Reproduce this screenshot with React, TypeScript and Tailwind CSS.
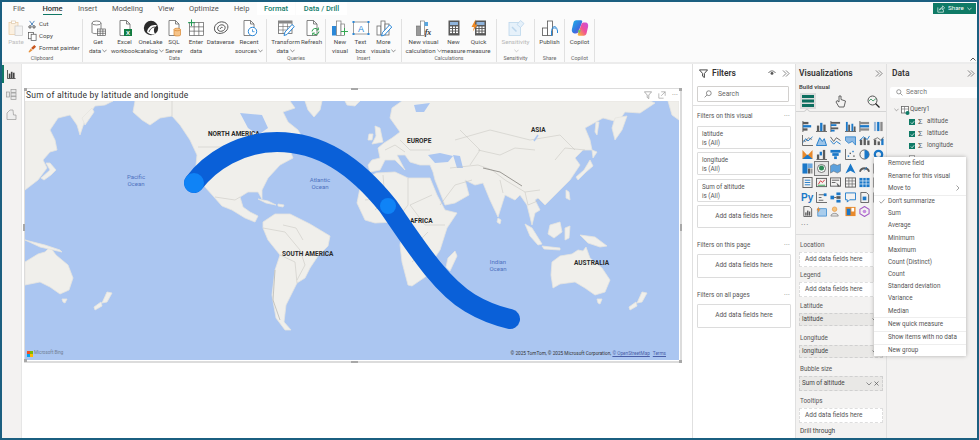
import React from "react";

const F = { fontFamily: 'Roboto,"Open Sans",sans-serif' };

/* ---------- Ribbon icons ---------- */
const Svg = ({ children, s = 18, cls = "" }: { children: React.ReactNode; s?: number; cls?: string }) => (
  <svg width={s} height={s} viewBox="0 0 18 18" fill="none" className={cls}>{children}</svg>
);
const GRID = "#5a5a5a";
const MiniTable = ({ x, y, w, h, c = GRID }: { x: number; y: number; w: number; h: number; c?: string }) => (
  <g stroke={c} strokeWidth="0.7">
    <rect x={x} y={y} width={w} height={h} fill="#fff" />
    <path d={`M${x} ${y + h / 3}H${x + w}M${x} ${y + (2 * h) / 3}H${x + w}M${x + w / 3} ${y}V${y + h}M${x + (2 * w) / 3} ${y}V${y + h}`} />
  </g>
);
const Doc = ({ c = "#666" }: { c?: string }) => (
  <path d="M4 1.5H10.5L14 5V16.5H4Z M10.5 1.5V5H14" stroke={c} strokeWidth="0.8" fill="#fff" />
);
const Bars = ({ c = "#6b6b6b" }: { c?: string }) => (
  <g stroke={c} strokeWidth="0.8" fill="#fff">
    <rect x="2" y="7" width="4" height="9" />
    <rect x="6" y="2" width="4" height="14" />
    <rect x="10" y="5" width="4" height="11" />
  </g>
);
const Calc = () => (
  <g>
    <rect x="3.5" y="1.5" width="11" height="15" fill="#595959" />
    <rect x="5" y="3" width="8" height="3" fill="#8fb4dc" />
    <g fill="#fff">
      {[7.5, 10, 12.5].map((y) => [5, 8, 11].map((x) => <rect key={`${x}-${y}`} x={x} y={y} width="2" height="1.6" />))}
    </g>
  </g>
);
const RIcons: Record<string, React.ReactNode> = {
  paste: (
    <Svg s={18}>
      <rect x="2" y="3.5" width="9" height="12" fill="#fbf0e0" stroke="#e8c9a0" strokeWidth="0.7" />
      <rect x="8" y="7" width="7.5" height="9.5" fill="#f3f3f3" stroke="#c9c9c9" strokeWidth="0.7" />
      <rect x="4.5" y="2" width="4" height="2.5" fill="#fff" stroke="#d8c0a0" strokeWidth="0.6" />
    </Svg>
  ),
  get: (
    <Svg>
      <path d="M3 4V13.5C3 15 12 15 12 13.5V4" stroke="#666" strokeWidth="0.8" fill="#fff" />
      <ellipse cx="7.5" cy="4" rx="4.5" ry="2" stroke="#666" strokeWidth="0.8" fill="#fff" />
      <MiniTable x={8.5} y={10} w={8} h={6.5} />
    </Svg>
  ),
  excel: (
    <Svg>
      <Doc />
      <rect x="8" y="10" width="8" height="7" fill="#107c41" />
      <text x="12" y="15.8" fontSize="6" fontWeight="700" fill="#fff" textAnchor="middle" fontFamily="Liberation Sans">X</text>
    </Svg>
  ),
  onelake: (
    <Svg>
      <circle cx="9" cy="9" r="7.2" fill="#2b2b2b" />
      <path d="M5 13C6 8 10 5 15 6.5C12 8 11 11 13 15C10 16 7 15 5 13Z" fill="#fff" />
      <path d="M7 13C8 10 10 8 13 8" stroke="#2b2b2b" strokeWidth="0.8" />
    </Svg>
  ),
  sql: (
    <Svg>
      <Doc />
      <path d="M9 10.5V16C9 17.3 15.5 17.3 15.5 16V10.5" fill="#f6c48a" stroke="#d9862f" strokeWidth="0.7" />
      <ellipse cx="12.2" cy="10.5" rx="3.2" ry="1.3" fill="#f6c48a" stroke="#d9862f" strokeWidth="0.7" />
    </Svg>
  ),
  enter: (
    <Svg>
      <MiniTable x={2.5} y={3.5} w={14} h={13} />
      <path d="M4.5 0.5V7M1 3.7H8" stroke="#1f9d55" strokeWidth="1" />
    </Svg>
  ),
  dataverse: (
    <Svg>
      <g stroke="#555" strokeWidth="1" fill="none">
        <path d="M3 12C0.5 6 7 2 11 3C16 3.500 17.500 9 14 12C11 15 5 15.500 3 12Z" />
        <path d="M6 11C4.500 8 8 5 11 6C14 7 13.500 10 11.500 11.500C9.500 12.800 7 12.500 6 11Z" />
        <path d="M8.500 10C8 8.800 9.500 8 10.500 8.500" />
      </g>
    </Svg>
  ),
  recent: (
    <Svg>
      <Doc />
      <circle cx="12.500" cy="12.500" r="4.200" fill="#fff" stroke="#2b88d8" strokeWidth="1" />
      <path d="M12.500 10.300V12.700H14.500" stroke="#2b88d8" strokeWidth="0.8" />
    </Svg>
  ),
  transform: (
    <Svg>
      <rect x="1.500" y="2" width="13.500" height="12.500" fill="#fff" stroke="#666" strokeWidth="0.8" />
      <rect x="1.500" y="2" width="13.500" height="2.500" fill="#888" />
      <path d="M1.500 7.500H15M1.500 11H15M6 4.500V14.500M10.500 4.500V14.500" stroke="#666" strokeWidth="0.6" />
      <path d="M7 16.500L8 13L15 5.500L17.300 7.500L10 15.500Z" fill="#fff" stroke="#2b88d8" strokeWidth="1" />
    </Svg>
  ),
  refresh: (
    <Svg>
      <Doc />
      <path d="M9 12.500A3.500 3.500 0 0 1 15 10.500M16 12.500A3.500 3.500 0 0 1 10 14.500" stroke="#2e9e4f" strokeWidth="1" />
      <path d="M15.500 8.500V11H13M9.500 16.500V14H12" stroke="#2e9e4f" strokeWidth="0.8" />
    </Svg>
  ),
  newvisual: (
    <Svg>
      <g>
        <rect x="1" y="7" width="4.500" height="9.500" fill="#2b88d8" />
        <rect x="5.500" y="2" width="4.500" height="14.500" fill="#fff" stroke="#777" strokeWidth="0.7" />
        <rect x="10" y="5" width="3.500" height="11.500" fill="#fff" stroke="#777" strokeWidth="0.7" />
      </g>
      <path d="M13.500 9V16M10 12.500H17" stroke="#36a852" strokeWidth="1" />
    </Svg>
  ),
  textbox: (
    <Svg>
      <rect x="1.500" y="3" width="15" height="12" fill="#fff" stroke="#777" strokeWidth="0.7" />
      <g fill="#2b88d8">
        <rect x="0.500" y="2" width="2" height="2" /><rect x="15.500" y="2" width="2" height="2" />
        <rect x="0.500" y="14" width="2" height="2" /><rect x="15.500" y="14" width="2" height="2" />
      </g>
      <text x="9" y="12.800" fontSize="9" fill="#2b88d8" textAnchor="middle" fontFamily="Liberation Sans">A</text>
    </Svg>
  ),
  more: (
    <Svg>
      <Bars />
      <path d="M6.500 17L7.500 13.500L14.500 6L16.800 8L9.500 16Z" fill="#fff" stroke="#2b88d8" strokeWidth="1" />
    </Svg>
  ),
  calc: (
    <Svg>
      <rect x="1.500" y="7" width="4" height="9.500" fill="#999" stroke="#666" strokeWidth="0.6" />
      <rect x="5.500" y="2" width="4" height="14.500" fill="#fff" stroke="#666" strokeWidth="0.6" />
      <rect x="9.500" y="3" width="3.500" height="4" fill="#5aa7e0" />
      <text x="13" y="16" fontSize="8" fontStyle="italic" fontWeight="700" fill="#333" textAnchor="middle" fontFamily="Liberation Serif">fx</text>
    </Svg>
  ),
  measure: <Svg><Calc /></Svg>,
  quick: (
    <Svg>
      <g transform="translate(1.500 0)"><Calc /></g>
      <path d="M5.500 0.500L1.500 8H4L2.800 12.500L7.500 5.500H5Z" fill="#f08a24" />
    </Svg>
  ),
  sens: (
    <Svg>
      <rect x="2" y="3.500" width="11.500" height="13" fill="#e6f1fa" stroke="#bcd6ec" strokeWidth="0.8" />
      <path d="M10 5.500L13.500 1.500L17 4.500L13.500 8.500Z" fill="#e6f1fa" stroke="#bcd6ec" strokeWidth="0.8" />
      <path d="M5 8L9.500 12.500" stroke="#bcd6ec" strokeWidth="1.500" />
    </Svg>
  ),
  publish: (
    <Svg>
      <g stroke="#555" strokeWidth="0.8" fill="#fff">
        <rect x="1.500" y="9" width="5" height="7.500" />
        <rect x="6.500" y="2" width="5" height="14.500" />
      </g>
      <path d="M10.500 17V11.500C10.500 10 12 9 13.500 9C15 9 16.500 10 16.500 12V14" stroke="#2b88d8" strokeWidth="1" />
      <path d="M11 9.500L13.500 7L16 9.500" stroke="#2b88d8" strokeWidth="1" />
    </Svg>
  ),
  copilot: (
    <svg width="18" height="18" viewBox="0 0 20 20">
      <defs>
        <linearGradient id="cpa" x1="0" y1="0" x2="1" y2="1">
          <stop offset="0" stopColor="#19b5e8" /><stop offset="0.6" stopColor="#3a6fe0" /><stop offset="1" stopColor="#b347d8" />
        </linearGradient>
        <linearGradient id="cpb" x1="0" y1="1" x2="1" y2="0">
          <stop offset="0" stopColor="#f9c32b" /><stop offset="0.5" stopColor="#f0509a" /><stop offset="1" stopColor="#c94fe0" />
        </linearGradient>
      </defs>
      <path d="M6 1.500H11C12.500 1.500 13 2.500 12 4.500L8.500 14C8 15.500 7 16 5.500 16H4C1.500 16 0.500 14 1 11.500L2.500 5C3 2.500 4 1.500 6 1.500Z" fill="url(#cpa)" />
      <path d="M14 18.500H9C7.500 18.500 7 17.500 8 15.500L11.500 6C12 4.500 13 4 14.500 4H16C18.500 4 19.500 6 19 8.500L17.500 15C17 17.500 16 18.500 14 18.500Z" fill="url(#cpb)" />
      <path d="M9 16.500L7.500 12.500H11Z" fill="#62c85c" />
    </svg>
  ),
};

const RBtn = ({ w, icon, l1, l2, caret, dim }: { w: number; icon: string; l1: string; l2?: string; caret?: boolean; dim?: boolean }) => (
  <div className="flex shrink-0 flex-col items-center" style={{ width: w }}>
    <div className="flex h-[19px] items-start justify-center">{RIcons[icon]}</div>
    <div className={`whitespace-nowrap text-center text-[6.2px] leading-[8.5px] ${dim ? "text-[#b5b5b5]" : "text-[#4a4a4a]"}`}>{l1}</div>
    <div className={`flex h-[8.5px] items-center whitespace-nowrap text-[6.2px] leading-[8.5px] ${dim ? "text-[#b5b5b5]" : "text-[#4a4a4a]"}`}>
      {l2}
      {caret && (
        <svg width="5" height="4" viewBox="0 0 6 4" className="ml-[1px]"><path d="M0.500 0.500L3 3L5.500 0.500" stroke={dim ? "#b5b5b5" : "#555"} strokeWidth="0.8" fill="none" /></svg>
      )}
    </div>
  </div>
);

const RGroup = ({ w, label, children }: { w: number; label: string; children: React.ReactNode }) => (
  <div className="flex shrink-0 flex-col border-r border-[#e1e1e1]" style={{ width: w }}>
    <div className="flex h-[38px] items-start">{children}</div>
    <div className="text-center text-[5.3px] leading-[7px] text-[#666]">{label}</div>
  </div>
);

const Ribbon = () => (
  <div className="relative h-[62px] shrink-0 border-b-2 border-[#ececec] bg-[#fbfbfb]">
    <div className="flex h-[13px] items-center pl-[11px] text-[7.5px] text-[#555]">
      <span className="w-[10px] whitespace-nowrap">File</span>
      <span className="relative ml-[20px] flex h-[13px] w-[19px] items-center justify-center whitespace-nowrap font-medium text-[#333]">
        Home
        <span className="absolute bottom-[0px] left-0 right-0 h-[1.500px] bg-[#117865]" />
      </span>
      <span className="ml-[16px] w-[18px] whitespace-nowrap">Insert</span>
      <span className="ml-[16px] w-[30px] whitespace-nowrap">Modeling</span>
      <span className="ml-[16px] w-[15px] whitespace-nowrap">View</span>
      <span className="ml-[16px] w-[29px] whitespace-nowrap">Optimize</span>
      <span className="ml-[16px] w-[14px] whitespace-nowrap">Help</span>
      <span className="ml-[9px] flex h-[13px] w-[38px] items-center justify-center whitespace-nowrap bg-white font-medium text-[#127d6b]">Format</span>
      <span className="ml-[1px] flex h-[13px] w-[51px] items-center justify-center whitespace-nowrap bg-white font-medium text-[#127d6b]">Data / Drill</span>
    </div>
    <div className="flex h-[47px] pt-[4px]">
      <div className="flex w-[81px] shrink-0 flex-col border-r border-[#e1e1e1]">
        <div className="flex h-[38px]">
          <div className="ml-[5px] flex w-[18px] flex-col items-center">
            <div className="h-[19px]">{RIcons.paste}</div>
            <span className="text-[6.2px] leading-[8.5px] text-[#bdbdbd]">Paste</span>
          </div>
          <div className="ml-[3px] flex flex-col gap-[1px] text-[6.2px] leading-[11px] text-[#4a4a4a]">
            <div className="flex h-[11px] items-center gap-[2px]">
              <svg width="8" height="9" viewBox="0 0 10 10"><path d="M2 0.500L6.500 6.500M8 0.500L3.500 6.500" stroke="#2b6cb0" strokeWidth="1" /><circle cx="2.500" cy="8" r="1.500" stroke="#333" fill="none" /><circle cx="7.500" cy="8" r="1.500" stroke="#333" fill="none" /></svg>
              <span className="ml-[1px]">Cut</span>
            </div>
            <div className="flex h-[11px] items-center gap-[2px]">
              <svg width="9" height="9" viewBox="0 0 10 10"><rect x="0.500" y="0.500" width="5.500" height="7" fill="#fff" stroke="#555" strokeWidth="0.8" /><rect x="3.500" y="2.500" width="5.500" height="7" fill="#fff" stroke="#555" strokeWidth="0.8" /></svg>
              Copy
            </div>
            <div className="flex h-[11px] items-center gap-[2px] whitespace-nowrap">
              <svg width="9" height="9" viewBox="0 0 10 10"><path d="M0.500 9L3 5L5 7L1.500 9.500Z" fill="#e8913a" /><path d="M3.500 4.500L7 1L9 3L5.500 6.500Z" fill="#c9561c" /></svg>
              Format painter
            </div>
          </div>
        </div>
        <div className="text-center text-[5.3px] leading-[7px] text-[#666]">Clipboard</div>
      </div>
      <RGroup w={184} label="Data">
        <div className="ml-[2px]" />
        <RBtn w={26} icon="get" l1="Get" l2="data" caret />
        <RBtn w={27} icon="excel" l1="Excel" l2="workbook" />
        <RBtn w={25} icon="onelake" l1="OneLake" l2="catalog" caret />
        <RBtn w={22} icon="sql" l1="SQL" l2="Server" />
        <RBtn w={22} icon="enter" l1="Enter" l2="data" />
        <RBtn w={27} icon="dataverse" l1="Dataverse" />
        <RBtn w={30} icon="recent" l1="Recent" l2="sources" caret />
      </RGroup>
      <RGroup w={59} label="Queries">
        <div className="ml-[3px]" />
        <RBtn w={31} icon="transform" l1="Transform" l2="data" caret />
        <RBtn w={21} icon="refresh" l1="Refresh" />
      </RGroup>
      <RGroup w={76} label="Insert">
        <div className="ml-[4px]" />
        <RBtn w={20} icon="newvisual" l1="New" l2="visual" />
        <RBtn w={21} icon="textbox" l1="Text" l2="box" />
        <RBtn w={25} icon="more" l1="More" l2="visuals" caret />
      </RGroup>
      <RGroup w={95} label="Calculations">
        <div className="ml-[4px]" />
        <RBtn w={35} icon="calc" l1="New visual" l2="calculation" caret />
        <RBtn w={25} icon="measure" l1="New" l2="measure" />
        <RBtn w={25} icon="quick" l1="Quick" l2="measure" />
      </RGroup>
      <RGroup w={38} label="Sensitivity">
        <RBtn w={37} icon="sens" l1="Sensitivity" l2=" " caret dim />
      </RGroup>
      <RGroup w={30} label="Share">
        <RBtn w={29} icon="publish" l1="Publish" />
      </RGroup>
      <RGroup w={30} label="Copilot">
        <RBtn w={29} icon="copilot" l1="Copilot" />
      </RGroup>
    </div>
    <div className="absolute right-[1px] top-[1px] flex h-[11px] w-[43px] items-center justify-center gap-[3px] bg-[#0f7a66] text-[6.2px] text-white">
      <svg width="8" height="8" viewBox="0 0 10 10" fill="none" stroke="#fff" strokeWidth="0.8"><path d="M1 3V9H8V6" /><path d="M3 6.500C3.500 4 5.500 3 7 3V1L9.500 3.500L7 6V4.500C5.500 4.500 4 5 3 6.500Z" /></svg>
      Share
      <svg width="5" height="4" viewBox="0 0 6 4"><path d="M0.500 0.500L3 3L5.500 0.500" stroke="#fff" strokeWidth="0.8" fill="none" /></svg>
    </div>
    <svg width="6" height="4" viewBox="0 0 6 4" className="absolute bottom-[1px] right-[1px]"><path d="M0.500 3.500L3 1L5.500 3.500" stroke="#444" strokeWidth="0.9" fill="none" /></svg>
  </div>
);

/* ---------- Left navigation ---------- */
const LeftNav = () => (
  <div className="flex w-[20px] shrink-0 flex-col items-center border-r border-[#e6e6e6] bg-[#f3f2f1]">
    <div className="relative flex h-[20px] w-full items-center justify-center">
      <span className="absolute left-0 top-[1px] h-[18px] w-[1.500px] bg-[#117865]" />
      <svg width="9" height="9" viewBox="0 0 10 10"><path d="M0.500 0V9.500H9.500" stroke="#444" fill="none" /><rect x="2" y="4" width="1.800" height="5" fill="#444" /><rect x="4.300" y="2" width="1.800" height="7" fill="#444" /><rect x="6.600" y="3" width="1.800" height="6" fill="#444" /></svg>
    </div>
    <div className="flex h-[20px] items-center justify-center">
      <svg width="11" height="11" viewBox="0 0 11 11" fill="#e8e8e8" stroke="#999" strokeWidth="0.7"><rect x="5" y="0.500" width="5" height="3" /><rect x="5" y="4" width="5" height="3" /><rect x="5" y="7.500" width="5" height="3" /><rect x="0.500" y="3" width="3" height="5" /></svg>
    </div>
    <div className="flex h-[21px] items-center justify-center">
      <svg width="11" height="11" viewBox="0 0 11 11" fill="#eee" stroke="#999" strokeWidth="0.7"><path d="M1 10.500V4L4 1H7L7.500 6H10V10.500Z" /></svg>
    </div>
  </div>
);

/* ---------- Map ---------- */
const LAND = "#f0efeb";
const land: string[] = [
  "135,101 133,112 142,120 150,125 160,118 172,116 180,125 190,140 197,155 196,165 199,175 205,187 214,197 222,206 232,210 245,218 255,222 258,216 250,212 243,207 240,197 248,192 258,192 262,199 262,190 268,178 280,165 293,158 289,148 298,150 305,142 298,130 288,122 283,112 295,108 290,101",
  "305,101 322,101 320,110 314,117 308,110",
  "258,199 268,201 276,205 266,203",
  "278,204 284,205 283,207 278,206",
  "263,222 275,214 290,214 310,224 330,236 328,246 318,256 310,268 305,278 297,283 291,295 286,305 284,322 291,330 285,330 276,318 272,295 275,270 280,255 268,240 263,228",
  "368,165 372,160 380,158 378,148 384,143 392,138 400,132 395,125 390,118 392,108 402,101 650,101 655,103 640,113 625,112 618,122 603,118 585,128 590,140 592,150 583,150 575,158 580,165 570,180 555,195 545,205 538,198 535,200 540,210 535,213 532,225 527,205 520,195 515,200 505,195 498,217 490,200 483,183 475,185 465,180 469,195 455,203 445,205 435,180 433,172 430,165 420,165 410,162 405,155 397,155 405,170 395,160 385,160 380,170 370,172",
  "357,203 360,188 368,178 376,173 395,172 408,178 430,178 437,195 445,210 457,213 447,228 440,250 430,265 428,275 412,286 408,285 402,262 400,245 403,228 395,222 375,223 365,220",
  "375,126 380,128 383,142 372,144 376,136",
  "369,134 373,134 372,140 368,140",
  "345,101 360,101 355,106 347,105",
  "455,251 457,256 450,271 446,267 448,258",
  "498,218 501,220 500,224 497,222",
  "615,118 627,116 622,130 615,140 612,128",
  "596,122 599,122 597,135 595,132",
  "592,150 597,152 593,158",
  "590,160 593,166 586,172 578,180 576,177 584,170",
  "566,190 569,192 570,200 566,198",
  "525,224 532,228 542,244 538,245 530,236",
  "542,246 560,248 560,250 544,249",
  "550,225 560,222 562,232 554,238 548,234",
  "565,228 570,226 569,238 565,240",
  "580,235 595,237 607,246 600,247 588,243",
  "552,262 560,256 572,254 578,250 583,251 586,247 590,258 602,268 610,280 605,292 595,295 585,288 575,282 560,284 553,288 551,275",
  "597,299 602,299 600,304 598,303",
  "642,292 647,293 642,302 637,303",
  "636,302 637,306 630,310 629,307",
  "668,101 679,101 679,120 672,115",
  "25,101 113,101 105,105 95,106 85,120 80,135 77,125 70,115 58,118 50,130 55,140 57,150 50,152 43,160 47,168 38,180 25,190",
  "82,118 92,108 94,112 85,125",
  "46,163 50,163 56,170 51,175 44,180 41,178 50,170",
  "25,262 38,254 45,252 50,247 56,255 68,265 73,278 69,290 60,294 50,287 40,282 25,285",
  "62,299 67,299 65,303 63,302",
  "107,292 112,293 107,302 102,303",
  "101,302 102,306 95,310 94,307",
  "25,240 45,245 60,250 62,252 40,247",
];
const water: string[] = [
  "240,113 262,115 268,128 258,135 248,128",
  "428,155 440,153 453,156 448,162 435,163",
  "453,155 460,156 463,168 457,168",
  "414,105 430,103 424,112 416,112",
];
const borders = [
  "198,147 257,147 262,150 272,152",
  "172,101 172,116",
  "215,197 235,200 240,197",
  "263,228 285,232 300,250 305,265 297,280",
  "280,255 295,262 297,283",
  "283,225 296,228 303,240",
  "383,175 385,200 375,210",
  "408,178 408,205 395,222",
  "432,195 410,205 425,225 445,225",
  "415,230 425,250 412,262",
  "405,240 420,240 428,232",
  "365,200 385,198 400,205",
  "440,205 455,185 472,180",
  "450,168 478,165 492,170 505,180 525,192 540,190",
  "455,140 490,130 530,140 560,135 575,150",
  "400,140 410,150 430,150",
  "385,150 395,145 405,152",
  "460,130 480,150 470,165",
  "478,150 500,155 515,148 535,150",
  "525,192 528,205 540,200",
  "500,180 503,193",
  "555,160 565,148 585,150",
];

const Legend = () => (
  <div className="relative h-[259px] w-[654px] overflow-hidden bg-[#abc6f1]">
    <svg width="654" height="259" viewBox="25 101 654 259" className="block">
      {land.map((p, i) => <polygon key={i} points={p} fill={LAND} stroke="#e6e4df" strokeWidth="0.8" strokeLinejoin="round" />)}
      {water.map((p, i) => <polygon key={i} points={p} fill="#abc6f1" />)}
      {borders.map((p, i) => <polyline key={i} points={p} fill="none" stroke="#c4c2bc" strokeWidth="0.5" />)}
      <path d="M483 168L500 172L522 186" stroke="#9a9893" strokeWidth="1" fill="none" />
      <path d="M275 270L273 300L280 320" stroke="#b5b3ae" strokeWidth="0.7" fill="none" />
      <path d="M538 135L534 141" stroke="#abc6f1" strokeWidth="1.500" />
    </svg>
    <Lbl x={183} y={29} t="NORTH AMERICA" />
    <Lbl x={382} y={36} t="EUROPE" />
    <Lbl x={506} y={25} t="ASIA" />
    <Lbl x={385} y={116} t="AFRICA" />
    <Lbl x={257} y={149} t="SOUTH AMERICA" />
    <Lbl x={549} y={158} t="AUSTRALIA" />
    <Ocean x={100} y={72} a="Pacific" b="Ocean" />
    <Ocean x={284} y={75} a="Atlantic" b="Ocean" />
    <Ocean x={462} y={157} a="Indian" b="Ocean" />
    <svg width="654" height="259" viewBox="25 101 654 259" className="absolute left-0 top-0">
      <path d="M194 183C210 162 240 142 277 142C320 142 355 165 388 206C415 245 440 285 470 303C485 312 497 316 510 319" stroke="#0a60d8" strokeWidth="20" strokeLinecap="round" fill="none" />
      <circle cx="194" cy="183" r="10" fill="#0f83f6" />
      <circle cx="388" cy="206" r="8" fill="#0f83f6" />
    </svg>
    <div className="absolute bottom-[3px] left-[2px] flex items-center gap-[1px] text-[4.500px] text-[#6f7d92]">
      <span className="grid h-[6px] w-[6px] grid-cols-2">
        <i className="bg-[#f25022]" /><i className="bg-[#7fba00]" /><i className="bg-[#00a4ef]" /><i className="bg-[#ffb900]" />
      </span>
      Microsoft Bing
    </div>
    <div className="absolute bottom-[3px] right-[13px] flex gap-[3px] whitespace-nowrap text-[4.700px] text-[#333]">
      <span>© 2025 TomTom, © 2025 Microsoft Corporation, <span className="text-[#4a5fa8] underline">© OpenStreetMap</span></span>
      <span className="text-[#4a5fa8] underline">Terms</span>
    </div>
  </div>
);
const Lbl = ({ x, y, t }: { x: number; y: number; t: string }) => (
  <span className="absolute whitespace-nowrap text-[6.500px] font-bold leading-[8px] text-[#2a2a2a]" style={{ left: x, top: y }}>{t}</span>
);
const Ocean = ({ x, y, a, b }: { x: number; y: number; a: string; b: string }) => (
  <span className="absolute text-center text-[6px] leading-[7px] text-[#4f72c0]" style={{ left: x, top: y, width: 22 }}>{a}<br />{b}</span>
);

const Handle = ({ cls }: { cls: string }) => <span className={`absolute bg-[#a8a8a8] ${cls}`} />;

const Canvas = () => (
  <div className="w-[670px] shrink-0 bg-white pl-[2px] pt-[24px]">
    <div className="relative h-[275px] w-[658px] border border-b-2 border-r-2 border-[#dcdcdc]">
      <div className="flex h-[12px] items-center justify-between">
        <span className="ml-[1px] whitespace-nowrap text-[8.500px] font-normal tracking-[0.25px] text-[#333]">Sum of altitude by latitude and longitude</span>
        <div className="mr-[2px] flex items-center gap-[6px]">
          <svg width="8" height="8" viewBox="0 0 10 10" fill="none" stroke="#777" strokeWidth="0.7"><path d="M0.500 1H9.500L6 5V9.500L4 8V5Z" /></svg>
          <svg width="8" height="8" viewBox="0 0 10 10" fill="none" stroke="#888" strokeWidth="0.7"><path d="M1 3V9H7M4 1H9V6M4 6L9 1" /></svg>
          <span className="text-[7px] leading-[6px] tracking-[0.2px] text-[#777]">···</span>
        </div>
      </div>
      <Legend />
      <Handle cls="left-[-1px] top-[-1px] h-[3px] w-[3px]" />
      <Handle cls="bottom-[-1px] left-[-1px] h-[3px] w-[3px]" />
      <Handle cls="right-[-2px] top-[-1px] h-[3px] w-[3px]" />
      <Handle cls="bottom-[-2px] right-[-2px] h-[3px] w-[3px]" />
      <Handle cls="left-[326px] top-[-1px] h-[2px] w-[7px]" />
      <Handle cls="bottom-[-2px] left-[326px] h-[2px] w-[7px]" />
      <Handle cls="left-[-2px] top-[135px] h-[7px] w-[2px]" />
      <Handle cls="right-[-2px] top-[135px] h-[7px] w-[2px]" />
    </div>
  </div>
);

/* ---------- Filters ---------- */
const Search = ({ cls }: { cls: string }) => (
  <div className={`flex items-center rounded-[1px] border border-[#d2d0ce] bg-white text-[6.800px] text-[#666] ${cls}`}>
    <svg width="8" height="8" viewBox="0 0 10 10" fill="none" stroke="#555" strokeWidth="0.8"><circle cx="6" cy="4" r="3" /><path d="M3.800 6.200L0.800 9.200" /></svg>
    <span className="ml-[6px]">Search</span>
  </div>
);
const FilterCard = ({ a, b, mt }: { a: string; b: string; mt: string }) => (
  <div className={`h-[23px] rounded-[1px] border border-[#dcdcdc] pl-[4px] pt-[3px] text-[6.300px] leading-[9px] text-[#555] ${mt}`}>
    <div>{a}</div><div>{b}</div>
  </div>
);
const AddCard = ({ mt, h }: { mt: string; h: string }) => (
  <div className={`flex items-center justify-center rounded-[1px] border border-[#dcdcdc] text-[6.500px] text-[#555] ${mt} ${h}`}>Add data fields here</div>
);
const FLabel = ({ t, mt }: { t: string; mt: string }) => (
  <div className={`flex h-[14px] items-center justify-between pr-[1px] text-[6.300px] text-[#555] ${mt}`}>
    <span>{t}</span><span className="text-[6.500px] tracking-[0.3px] text-[#777]">···</span>
  </div>
);
const Chevrons = ({ c = "#555" }: { c?: string }) => (
  <svg width="8" height="7" viewBox="0 0 9 8" fill="none" stroke={c} strokeWidth="0.8"><path d="M1 0.500L4.500 4L1 7.500M4.500 0.500L8 4L4.500 7.500" /></svg>
);
const Filters = () => (
  <div className="w-[103px] shrink-0 border-l border-[#e0e0e0] bg-white">
    <div className="mt-[2px] flex h-[14px] items-center pl-[6px] pr-[5px]">
      <svg width="9" height="9" viewBox="0 0 10 10" fill="none" stroke="#333" strokeWidth="1"><path d="M0.500 1H9.500L6 5V9.500L4 8V5Z" /></svg>
      <span className="ml-[4px] text-[8.500px] font-semibold text-[#333]">Filters</span>
      <svg width="8" height="6" viewBox="0 0 10 7" className="ml-auto mr-[6px]"><path d="M0.500 3.500C3 0 7 0 9.500 3.500" stroke="#555" fill="none" /><circle cx="5" cy="4" r="1.800" fill="#555" /></svg>
      <Chevrons />
    </div>
    <Search cls="ml-[4px] mt-[6px] h-[16px] w-[92px] pl-[6px]" />
    <div className="mt-[3px] border-b border-[#e0e0e0]" />
    <div className="pl-[4px] pr-[4px]">
      <FLabel t="Filters on this visual" mt="mt-[4px]" />
      <FilterCard a="latitude" b="is (All)" mt="mt-[2px]" />
      <FilterCard a="longitude" b="is (All)" mt="mt-[3px]" />
      <FilterCard a="Sum of altitude" b="is (All)" mt="mt-[4px]" />
      <AddCard mt="mt-[3px]" h="h-[23px]" />
      <FLabel t="Filters on this page" mt="mt-[11px]" />
      <AddCard mt="mt-[1px]" h="h-[24px]" />
      <FLabel t="Filters on all pages" mt="mt-[11px]" />
      <AddCard mt="mt-[1px]" h="h-[24px]" />
    </div>
  </div>
);

/* ---------- Visualization gallery icons ---------- */
const B = "#1b78c8";
const D = "#5c5c5c";
const O = "#e8892b";
const V = ({ children }: { children: React.ReactNode }) => (
  <svg width="11" height="11" viewBox="0 0 12 12" fill="none">{children}</svg>
);
const Rs = ({ r }: { r: [number, number, number, number, string][] }) => (
  <>{r.map((a, i) => <rect key={i} x={a[0]} y={a[1]} width={a[2]} height={a[3]} fill={a[4]} />)}</>
);
const gallery: React.ReactNode[] = [
  <V><path d="M1 0V12" stroke={D} /><Rs r={[[1, 1, 6, 2.500, D], [1, 4.500, 9, 2.500, B], [1, 8, 5, 2.500, D]]} /></V>,
  <V><path d="M0 11.500H12" stroke={D} /><Rs r={[[1, 5, 2.500, 6, D], [4.500, 2, 2.500, 9, B], [8, 4, 2.500, 7, D]]} /></V>,
  <V><path d="M1 0V12" stroke={D} /><Rs r={[[1, 1, 10, 2, D], [1, 3.500, 6, 2, B], [1, 7, 8, 2, D], [1, 9.500, 4, 2, B]]} /></V>,
  <V><path d="M0 11.500H12" stroke={D} /><Rs r={[[1, 1, 2, 10, B], [3.500, 4, 2, 7, D], [7, 3, 2, 8, B], [9.500, 6, 2, 5, D]]} /></V>,
  <V><path d="M1 0V12" stroke={D} /><Rs r={[[1, 1, 10, 2.500, "#8a8a8a"], [1, 4.500, 10, 2.500, B], [1, 8, 10, 2.500, "#8a8a8a"]]} /></V>,
  <V><Rs r={[[1, 1, 2.500, 10, "#9ab8d8"], [4.500, 1, 2.500, 10, B], [8, 1, 2.500, 10, "#8a8a8a"]]} /></V>,

  <V><path d="M0.500 0V11.500H12" stroke={D} /><path d="M1.500 8L4 4L6.500 6.500L11.500 2" stroke={B} /><path d="M1.500 6L4 7L7 3L11 5" stroke={D} strokeWidth="0.7" /></V>,
  <V><path d="M0.500 11.500L4 3L7 7L9 4L11.500 11.500Z" fill="#9cc4e8" stroke={B} /></V>,
  <V><path d="M0.500 2L4 7L7 3L11.500 6" stroke={D} /><path d="M0.500 6L4 10L7 7L11.500 10" stroke={B} /></V>,
  <V><path d="M0.500 2H11.500V11L8 7L4 9L0.500 6Z" fill="#8cb9e4" stroke={B} strokeWidth="0.8" /></V>,
  <V><Rs r={[[1, 5, 2.500, 6, D], [5, 3, 2.500, 8, D], [9, 6, 2.500, 5, D]]} /><path d="M0.500 6L5 2L9 5L11.500 1" stroke={B} /></V>,
  <V><Rs r={[[1, 5, 2.500, 6, D], [5, 7, 2.500, 4, D], [9, 4, 2.500, 7, B]]} /><path d="M0.500 5L5 3L9 6L11.500 2" stroke={D} strokeWidth="0.8" /></V>,

  <V><path d="M0.500 1L6 7L11.500 1V11H0.500Z" fill={O} /><path d="M0.500 11L6 6L11.500 11" fill={B} /></V>,
  <V><path d="M0.500 11.500H12" stroke={D} /><Rs r={[[1, 6, 2.500, 5, D], [4, 3, 2.500, 4, B], [7.500, 1, 2.500, 10, D]]} /></V>,
  <V><Rs r={[[0.500, 1, 11, 3, B], [2.500, 4.500, 7, 3, B], [4.500, 8, 3, 3, B]]} /></V>,
  <V><path d="M0.500 0V11.500H12" stroke={D} /><Rs r={[[3, 7, 1.500, 1.500, B], [5, 4, 1.500, 1.500, D], [8, 2, 1.500, 1.500, B], [9, 7, 1.500, 1.500, D]]} /></V>,
  <V><circle cx="6" cy="6" r="5" stroke={D} /><path d="M6 6V1A5 5 0 0 1 6 11Z" fill={B} /></V>,
  <V><circle cx="6" cy="6" r="4" stroke={B} strokeWidth="2.500" /></V>,

  <V><Rs r={[[0.500, 0.500, 5.500, 11, B], [6.500, 0.500, 5, 5, "#6aa7de"], [6.500, 6, 2.300, 5.500, D], [9.200, 6, 2.300, 5.500, "#9a9a9a"]]} /></V>,
  <svg width="13" height="13" viewBox="0 0 13 13" className="bg-[#e6e6e6] outline outline-1 outline-[#7a7a7a]"><circle cx="6.500" cy="6.500" r="4" fill="#fff" stroke="#555" strokeWidth="0.8" /><circle cx="6.500" cy="6" r="2.500" fill="#2e8b57" /></svg>,
  <V><path d="M0.500 3L4 1L8 2.500L11.500 1V9L8 11L4 9L0.500 11Z" fill="#5ba0dc" stroke={D} strokeWidth="0.5" /></V>,
  <V><path d="M6 0.500L11.500 11.500L6 8.500L0.500 11.500Z" fill={B} /></V>,
  <V><path d="M1 9.500A5.200 5.200 0 0 1 11 9.500" stroke={D} strokeWidth="2" /><path d="M6 8L8.500 4.500" stroke={B} /></V>,
  <V><rect x="1" y="1" width="10" height="10" stroke={D} /></V>,

  <V><rect x="1" y="0.500" width="10" height="11" stroke={D} /><path d="M3 3.500H9M3 6H9M3 8.500H9" stroke={B} /></V>,
  <V><rect x="0.500" y="1.500" width="11" height="9" stroke={D} /><path d="M2.500 8L5 4L7 6L9.500 3" stroke="#d13438" /><path d="M2 9H10" stroke="#36a852" /></V>,
  <V><rect x="0.500" y="1" width="11" height="9" stroke={D} /><path d="M2 3.500H10M2 6H6" stroke={D} /><path d="M7 6L11 10L8.500 10.500Z" fill={D} /></V>,
  <V><rect x="0.500" y="1" width="11" height="10" stroke={D} /><path d="M0.500 4.300H11.500M0.500 7.600H11.500M4.200 1V11M7.800 1V11" stroke={D} strokeWidth="0.7" /></V>,
  <V><rect x="0.500" y="1" width="11" height="10" fill={B} /><path d="M0.500 4.300H11.500M0.500 7.600H11.500M4.200 1V11M7.800 1V11" stroke="#fff" strokeWidth="0.7" /></V>,
  <V><rect x="1" y="1" width="10" height="10" stroke={D} /></V>,

  <span className="text-[10px] font-bold leading-[11px] text-[#1b78c8]" style={{ fontFamily: "Liberation Sans, sans-serif" }}>Py</span>,
  <V><path d="M0.500 0V11.500H12" stroke={D} /><path d="M3 3H9M3 6H6M3 9H8" stroke={D} /><rect x="8.500" y="1.500" width="3" height="3" fill={B} /></V>,
  <V><rect x="0.500" y="4" width="4" height="4" fill={B} /><rect x="7" y="0.500" width="4.500" height="3" fill={B} /><rect x="7" y="4.500" width="4.500" height="3" fill={D} /><rect x="7" y="8.500" width="4.500" height="3" fill={B} /><path d="M4.500 6H7" stroke={D} /></V>,
  <V><path d="M0.500 1H11.500V8.500H5L2.500 11V8.500H0.500Z" stroke={B} /></V>,
  <V><path d="M2 0.500H8L10.500 3V11.500H2Z" stroke={D} /><rect x="4" y="5" width="4" height="4" fill={B} /></V>,
  <V><rect x="1" y="1" width="10" height="10" stroke={D} /></V>,

  <V><path d="M2 0.500H8L10.500 3V11.500H2Z" stroke={D} /><Rs r={[[3.500, 7, 1.500, 3.500, D], [5.500, 5, 1.500, 5.500, D], [7.500, 6, 1.500, 4.500, D]]} /></V>,
  <V><rect x="2" y="3" width="9.500" height="8" fill="#a9cdec" stroke={B} strokeWidth="0.7" /><path d="M3 0.500L0.500 4.500H2.500L1.500 7.500L5 3.500H3Z" fill={O} /></V>,
  <V><circle cx="5" cy="3.500" r="2.500" fill="#f3c37c" stroke={O} strokeWidth="0.6" /><path d="M1 11C1 7 9 7 9 11Z" fill="#e2e2e2" stroke={D} strokeWidth="0.6" /></V>,
  <V><rect x="0.500" y="1" width="11" height="10" fill={O} /><rect x="2" y="3" width="4" height="7" fill={B} /><rect x="7" y="2" width="3" height="4" fill="#fff" /></V>,
  <V><path d="M6 0.500L11 3.500V8.500L6 11.500L1 8.500V3.500Z" stroke="#a259c4" strokeWidth="1.100" /><circle cx="6" cy="6" r="2" fill="#c68be0" /></V>,
  <V><path d="M2 2L10 10M10 2L2 10" stroke={B} strokeWidth="1.500" /></V>,
];

const Well = ({ label, mt }: { label: string; mt: string }) => (
  <div className={mt}>
    <div className="h-[12px] pl-[4px] text-[6.300px] leading-[12px] text-[#555]">{label}</div>
    <div className="mx-[3px] mt-[1px] flex h-[15px] items-center border border-dashed border-[#dedede] bg-white pl-[5px] text-[6.500px] text-[#555]">Add data fields here</div>
  </div>
);
const Field = ({ label, value, mt, x, h = "h-[13px]" }: { label: string; value: string; mt: string; x?: boolean; h?: string }) => (
  <div className={mt}>
    <div className="h-[12px] pl-[4px] text-[6.300px] leading-[12px] text-[#555]">{label}</div>
    <div className={`mx-[3px] mt-[1px] flex items-center border border-dashed border-[#d0d0d0] bg-[#e9e8e6] pl-[2px] pr-[2px] text-[6.300px] text-[#444] ${h}`}>
      {value}
      <svg width="6" height="4" viewBox="0 0 6 4" className="ml-auto mr-[2px]"><path d="M0.500 0.500L3 3L5.500 0.500" stroke="#666" strokeWidth="0.7" fill="none" /></svg>
      {x && <svg width="5" height="5" viewBox="0 0 5 5" className="mr-[1px]"><path d="M0.500 0.500L4.500 4.500M4.500 0.500L0.500 4.500" stroke="#555" strokeWidth="0.7" /></svg>}
    </div>
  </div>
);

const Viz = () => (
  <div className="w-[91px] shrink-0 overflow-hidden border-l border-[#e0e0e0] bg-[#f3f2f1]">
    <div className="mt-[2px] flex h-[14px] items-center justify-between pl-[3px] pr-[3px]">
      <span className="text-[8.500px] font-semibold text-[#333]">Visualizations</span>
      <Chevrons />
    </div>
    <div className="mt-[1px] h-[12px] pl-[3px] text-[6px] font-semibold leading-[12px] text-[#444]">Build visual</div>
    <div className="flex h-[16px] items-center pl-[4px]">
      <div className="flex h-[16px] w-[16px] items-center justify-center bg-[#dcdcdc]">
        <svg width="12" height="12" viewBox="0 0 12 12"><rect x="0" y="0" width="12" height="3" fill="#0d6e5f" /><rect x="0" y="4.500" width="12" height="3" fill="#0d6e5f" /><rect x="0" y="9" width="12" height="3" fill="#0d6e5f" /></svg>
      </div>
      <svg width="13" height="13" viewBox="0 0 13 13" fill="none" stroke="#555" strokeWidth="0.9" className="ml-[18px]"><path d="M5 1V7L3 5.500L2 7L5 12H10L11.500 6L7 4.500V1Z" /></svg>
      <svg width="13" height="13" viewBox="0 0 13 13" fill="none" className="ml-[20px]"><circle cx="5.500" cy="5.500" r="4.500" stroke="#555" /><path d="M2 6L4 4L6 6L9 3.500" stroke="#2e8b57" strokeWidth="0.8" /><path d="M8.500 8.500L12.500 12.500" stroke="#222" strokeWidth="1.300" /></svg>
    </div>
    <div className="relative mt-[2px] border-b border-[#d4d4d4]">
      <span className="absolute left-[9px] top-[-2px] h-[4px] w-[4px] rotate-45 border-l border-t border-[#cfcfcf] bg-[#f3f2f1]" />
    </div>
    <div className="ml-[4px] mt-[7px] grid w-[86px] grid-cols-6 auto-rows-[14.200px]">
      {gallery.map((g, i) => <div key={i} className="flex items-center justify-center">{g}</div>)}
    </div>
    <div className="h-[14px] pl-[5px] pt-[1px] text-[8px] leading-[12px] tracking-[0.5px] text-[#666]">···</div>
    <div className="mt-[2px] border-b border-[#dcdcdc]" />
    <Well label="Location" mt="mt-[4px]" />
    <Well label="Legend" mt="mt-[2px]" />
    <Field label="Latitude" value="latitude" mt="mt-[3px]" />
    <Field label="Longitude" value="longitude" mt="mt-[6px]" />
    <Field label="Bubble size" value="Sum of altitude" mt="mt-[5px]" x h="h-[15px]" />
    <Well label="Tooltips" mt="mt-[4px]" />
    <div className="mt-[2px] h-[12px] pl-[4px] text-[6.500px] leading-[12px] text-[#444]">Drill through</div>
  </div>
);

/* ---------- Data ---------- */
const Check = ({ on = true }: { on?: boolean }) => (
  <span className={`flex h-[6px] w-[6px] items-center justify-center ${on ? "bg-[#0f7a66]" : "border border-[#aaa] bg-white"}`}>
    {on && <svg width="5" height="5" viewBox="0 0 6 6"><path d="M1 3L2.500 4.500L5 1.500" stroke="#fff" strokeWidth="0.9" fill="none" /></svg>}
  </span>
);
const DataRow = ({ t, on }: { t?: string; on?: boolean }) => (
  <div className="flex h-[12px] items-center pl-[22px] text-[6.300px] text-[#555]">
    <Check on={on} />
    {t && <span className="ml-[3px] w-[9px] text-[8px] leading-[8px] text-[#555]">Σ</span>}
    {t}
  </div>
);
const DataPane = () => (
  <div className="w-[91px] shrink-0 overflow-hidden border-l border-[#e0e0e0] bg-[#f3f2f1]">
    <div className="mt-[2px] flex h-[14px] items-center justify-between pl-[5px] pr-[2px]">
      <span className="text-[8.500px] font-semibold text-[#333]">Data</span>
      <Chevrons />
    </div>
    <div className="ml-[3px] mt-[7px] flex h-[11px] items-center rounded-l-[2px] bg-white pl-[6px] text-[6.800px] text-[#777]">
      <svg width="7" height="7" viewBox="0 0 10 10" fill="none" stroke="#666" strokeWidth="0.9"><circle cx="4" cy="4" r="3" /><path d="M6.200 6.200L9.200 9.200" /></svg>
      <span className="ml-[3px]">Search</span>
    </div>
    <div className="mt-[6px] flex h-[12px] items-center pl-[7px] text-[6.300px] text-[#555]">
      <svg width="5" height="4" viewBox="0 0 6 4"><path d="M0.500 0.500L3 3L5.500 0.500" stroke="#777" strokeWidth="0.7" fill="none" /></svg>
      <svg width="9" height="9" viewBox="0 0 9 9" className="ml-[2px]"><rect x="0.500" y="0.500" width="7" height="6.500" fill="#fff" stroke="#666" strokeWidth="0.8" /><path d="M0.500 3H7.500M3.500 0.500V7" stroke="#666" strokeWidth="0.6" /><circle cx="6.500" cy="7" r="2" fill="#0f7a66" /></svg>
      Query1
    </div>
    <DataRow t="altitude" on />
    <DataRow t="latitude" on />
    <DataRow t="longitude" on />
    <DataRow on={false} />
  </div>
);

/* ---------- Context menu ---------- */
const MI = ({ t, chk, arrow }: { t: string; chk?: boolean; arrow?: boolean }) => (
  <div className="relative flex h-[12.200px] items-center whitespace-nowrap pl-[14px] pr-[6px] text-[6.300px] text-[#555]">
    {chk && <svg width="6" height="5" viewBox="0 0 6 5" className="absolute left-[5px]"><path d="M0.500 2.500L2.200 4.200L5.500 0.500" stroke="#777" strokeWidth="0.7" fill="none" /></svg>}
    {t}
    {arrow && <svg width="4" height="6" viewBox="0 0 4 6" className="ml-auto"><path d="M0.500 0.500L3 3L0.500 5.500" stroke="#777" strokeWidth="0.7" fill="none" /></svg>}
  </div>
);
const Menu = () => (
  <div className="absolute left-[872px] top-[155px] h-[199px] w-[92px] bg-white pt-[1px] shadow-[0_0_4px_rgba(0,0,0,0.28)]">
    <MI t="Remove field" />
    <MI t="Rename for this visual" />
    <MI t="Move to" arrow />
    <div className="border-b border-[#eeeeee]" />
    <MI t="Don't summarize" chk />
    <MI t="Sum" />
    <MI t="Average" />
    <MI t="Minimum" />
    <MI t="Maximum" />
    <MI t="Count (Distinct)" />
    <MI t="Count" />
    <MI t="Standard deviation" />
    <MI t="Variance" />
    <MI t="Median" />
    <div className="border-b border-[#eeeeee]" />
    <MI t="New quick measure" />
    <div className="border-b border-[#eeeeee]" />
    <MI t="Show items with no data" />
    <div className="border-b border-[#eeeeee]" />
    <MI t="New group" />
  </div>
);

export default function App() {
  return (
    <div className="relative h-[440px] w-[979px] overflow-hidden border-2 border-[#1b5f80] bg-white" style={F}>
      <Ribbon />
      <div className="flex h-[374px]">
        <LeftNav />
        <Canvas />
        <Filters />
        <Viz />
        <DataPane />
      </div>
      <Menu />
    </div>
  );
}
